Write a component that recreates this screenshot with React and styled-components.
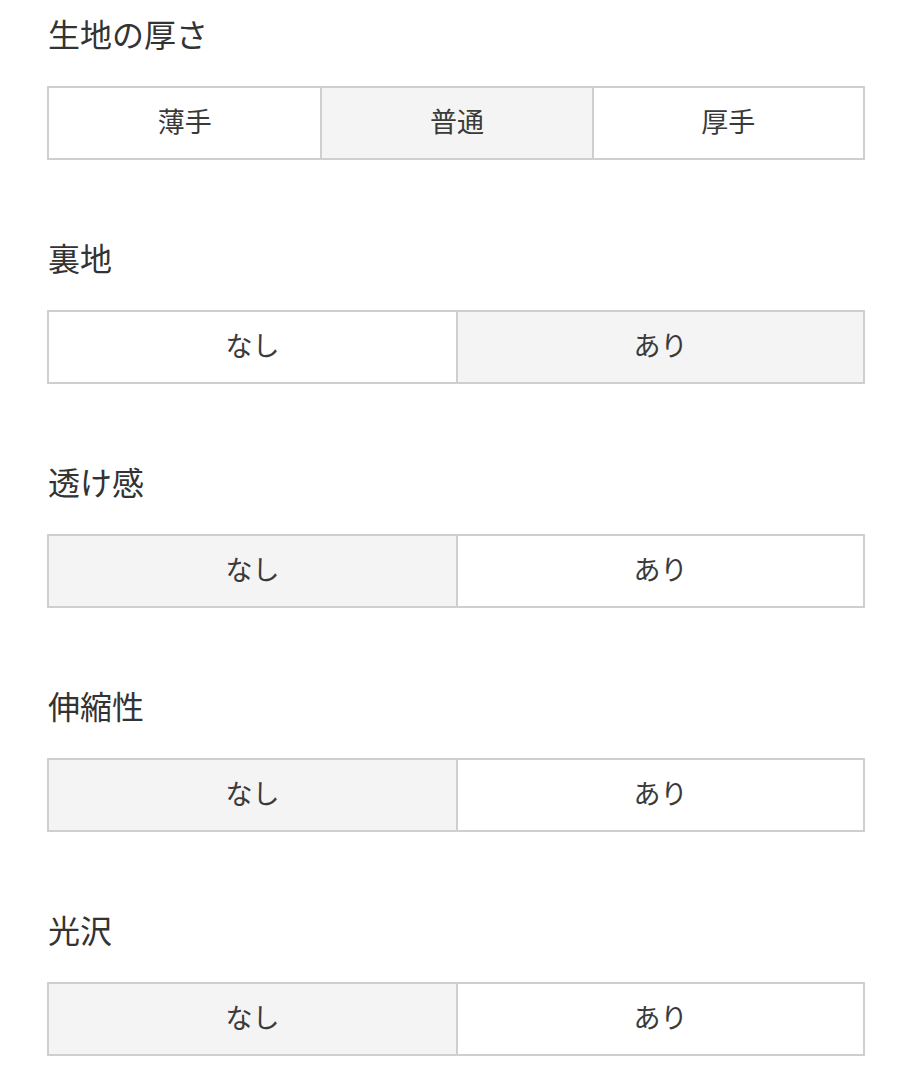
import React from "react";
import styled, { createGlobalStyle } from "styled-components";

const Global = createGlobalStyle`
  html, body { margin: 0; padding: 0; background: #fff; }
  body { font-family: "Noto Sans CJK JP", "Noto Sans", sans-serif; color: #333; }
`;

const Page = styled.div`
  padding: 9px 47px 0 47px;
  width: 818px;
  display: flex;
  flex-direction: column;
  gap: 73px;
`;

const Section = styled.section`
  display: flex;
  flex-direction: column;
  gap: 29px;
`;

const Heading = styled.h2`
  margin: 0;
  padding-left: 1px;
  font-size: 32px;
  font-weight: 400;
  line-height: 48px;
  color: #333;
`;

const Group = styled.div`
  display: grid;
  grid-template-columns: repeat(${(p) => p.$count}, 1fr);
  border: 2px solid #cfcfcf;
  height: 70px;
`;

const Option = styled.div`
  display: flex;
  align-items: center;
  justify-content: center;
  padding-bottom: 6px;
  font-size: 27px;
  color: #3a3a3a;
  background: ${(p) => (p.$active ? "#f4f4f4" : "#fff")};
  & + & { border-left: 2px solid #cfcfcf; }
`;

const data = [
  { title: "生地の厚さ", options: ["薄手", "普通", "厚手"], active: 1 },
  { title: "裏地", options: ["なし", "あり"], active: 1 },
  { title: "透け感", options: ["なし", "あり"], active: 0 },
  { title: "伸縮性", options: ["なし", "あり"], active: 0 },
  { title: "光沢", options: ["なし", "あり"], active: 0 },
];

export default function App() {
  return (
    <>
      <Global />
      <Page>
        {data.map((s) => (
          <Section key={s.title}>
            <Heading>{s.title}</Heading>
            <Group $count={s.options.length}>
              {s.options.map((o, i) => (
                <Option key={o} $active={i === s.active}>{o}</Option>
              ))}
            </Group>
          </Section>
        ))}
      </Page>
    </>
  );
}
